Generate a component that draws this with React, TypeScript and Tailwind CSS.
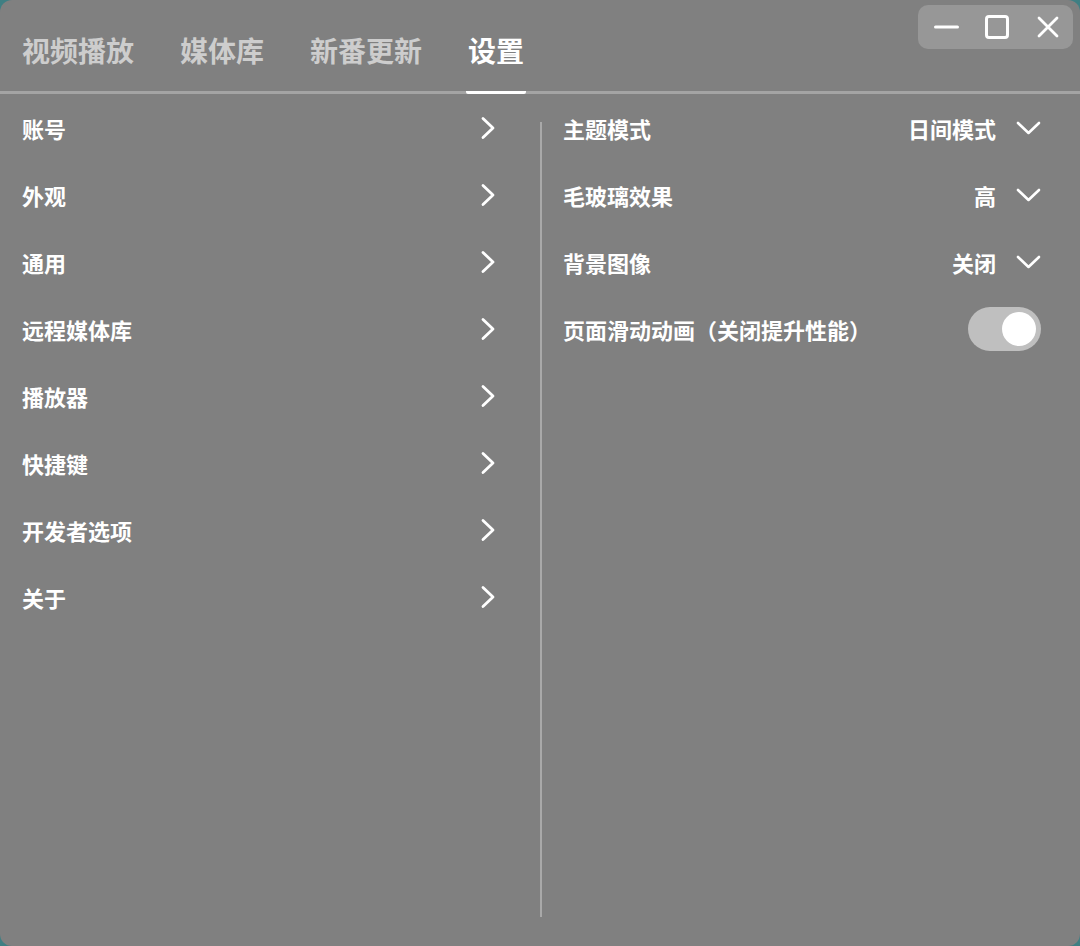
import { useState } from "react";

const tabs = ["视频播放", "媒体库", "新番更新", "设置"];

const menu = ["账号", "外观", "通用", "远程媒体库", "播放器", "快捷键", "开发者选项", "关于"];

const options = [
  { label: "主题模式", value: "日间模式" },
  { label: "毛玻璃效果", value: "高" },
  { label: "背景图像", value: "关闭" }
];

function ChevronRight() {
  return (
    <svg width="16" height="24" viewBox="0 0 16 24" fill="none">
      <path d="M3 2.5 L13 12 L3 21.5" stroke="white" strokeWidth="2.8" strokeLinecap="round" strokeLinejoin="round" />
    </svg>
  );
}

function ChevronDown() {
  return (
    <svg width="25" height="14" viewBox="0 0 25 14" fill="none">
      <path d="M2 2 L12.5 12 L23 2" stroke="white" strokeWidth="2.6" strokeLinecap="round" strokeLinejoin="round" />
    </svg>
  );
}

export default function App() {
  const [tab, setTab] = useState("设置");
  const [anim, setAnim] = useState(true);

  return (
    <div
      className="w-[1080px] h-[946px] bg-[#3f7f83] text-white"
      style={{ fontFamily: '"Noto Sans CJK SC", "Noto Sans", sans-serif' }}
    >
      <div className="w-full h-full bg-[#808080] rounded-[12px] overflow-hidden flex flex-col">

        {/* HEADER */}
        <div className="h-[94px] border-b-[3px] border-[#a4a4a4] flex justify-between shrink-0">
          <div className="flex items-end gap-[42px] pl-[20px]">
            {tabs.map((t) => {
              const active = tab === t;
              return (
                <button
                  key={t}
                  onClick={() => setTab(t)}
                  className={`
                    -mb-[3px]
                    px-[2px]
                    pb-[24px]
                    border-b-[3px]
                    rounded-b-[2px]
                    text-[28px]
                    leading-[34px]
                    font-bold
                    ${active ? "border-white text-white" : "border-transparent text-[#cdcdcd]"}
                  `}
                >
                  {t}
                </button>
              );
            })}
          </div>

          {/* WINDOW CONTROLS */}
          <div className="self-start mt-[5px] mr-[7px] w-[155px] h-[44px] rounded-[10px] bg-[#979797] flex items-center pl-[16px]">
            <svg width="25" height="4" viewBox="0 0 25 4">
              <rect x="0" y="0.5" width="25" height="3" rx="1.5" fill="white" />
            </svg>
            <svg width="24" height="24" viewBox="0 0 24 24" className="ml-[26px]">
              <rect x="1.5" y="1.5" width="21" height="21" rx="2.5" fill="none" stroke="white" strokeWidth="3" />
            </svg>
            <svg width="22" height="22" viewBox="0 0 22 22" className="ml-[28px]">
              <path d="M2 2 L20 20 M20 2 L2 20" stroke="white" strokeWidth="2.8" strokeLinecap="round" />
            </svg>
          </div>
        </div>

        {/* BODY */}
        <div className="flex-1 flex">

          {/* MENU */}
          <div className="w-[540px] pl-[22px] pr-[44px] flex flex-col">
            {menu.map((m) => (
              <div key={m} className="h-[67px] flex items-center justify-between">
                <span className="text-[22px] leading-[30px] font-bold">{m}</span>
                <ChevronRight />
              </div>
            ))}
          </div>

          <div className="w-[2px] bg-[#a9a9a9] mt-[28px] mb-[29px]" />

          {/* CONTENT */}
          <div className="flex-1 pl-[21px] pr-[39px] flex flex-col">
            {options.map((o) => (
              <div key={o.label} className="h-[67px] flex items-center justify-between">
                <span className="text-[22px] leading-[30px] font-bold">{o.label}</span>
                <div className="flex items-center gap-[20px]">
                  <span className="text-[22px] leading-[30px] font-bold">{o.value}</span>
                  <ChevronDown />
                </div>
              </div>
            ))}

            <div className="h-[67px] flex items-center justify-between">
              <span className="text-[22px] leading-[30px] font-bold">页面滑动动画（关闭提升性能）</span>
              <button
                onClick={() => setAnim(!anim)}
                className={`
                  w-[73px]
                  h-[44px]
                  rounded-full
                  bg-[#bfbfbf]
                  flex
                  items-center
                  px-[5px]
                  ${anim ? "justify-end" : "justify-start"}
                `}
              >
                <span className="w-[34px] h-[34px] rounded-full bg-white" />
              </button>
            </div>
          </div>

        </div>

      </div>
    </div>
  );
}
